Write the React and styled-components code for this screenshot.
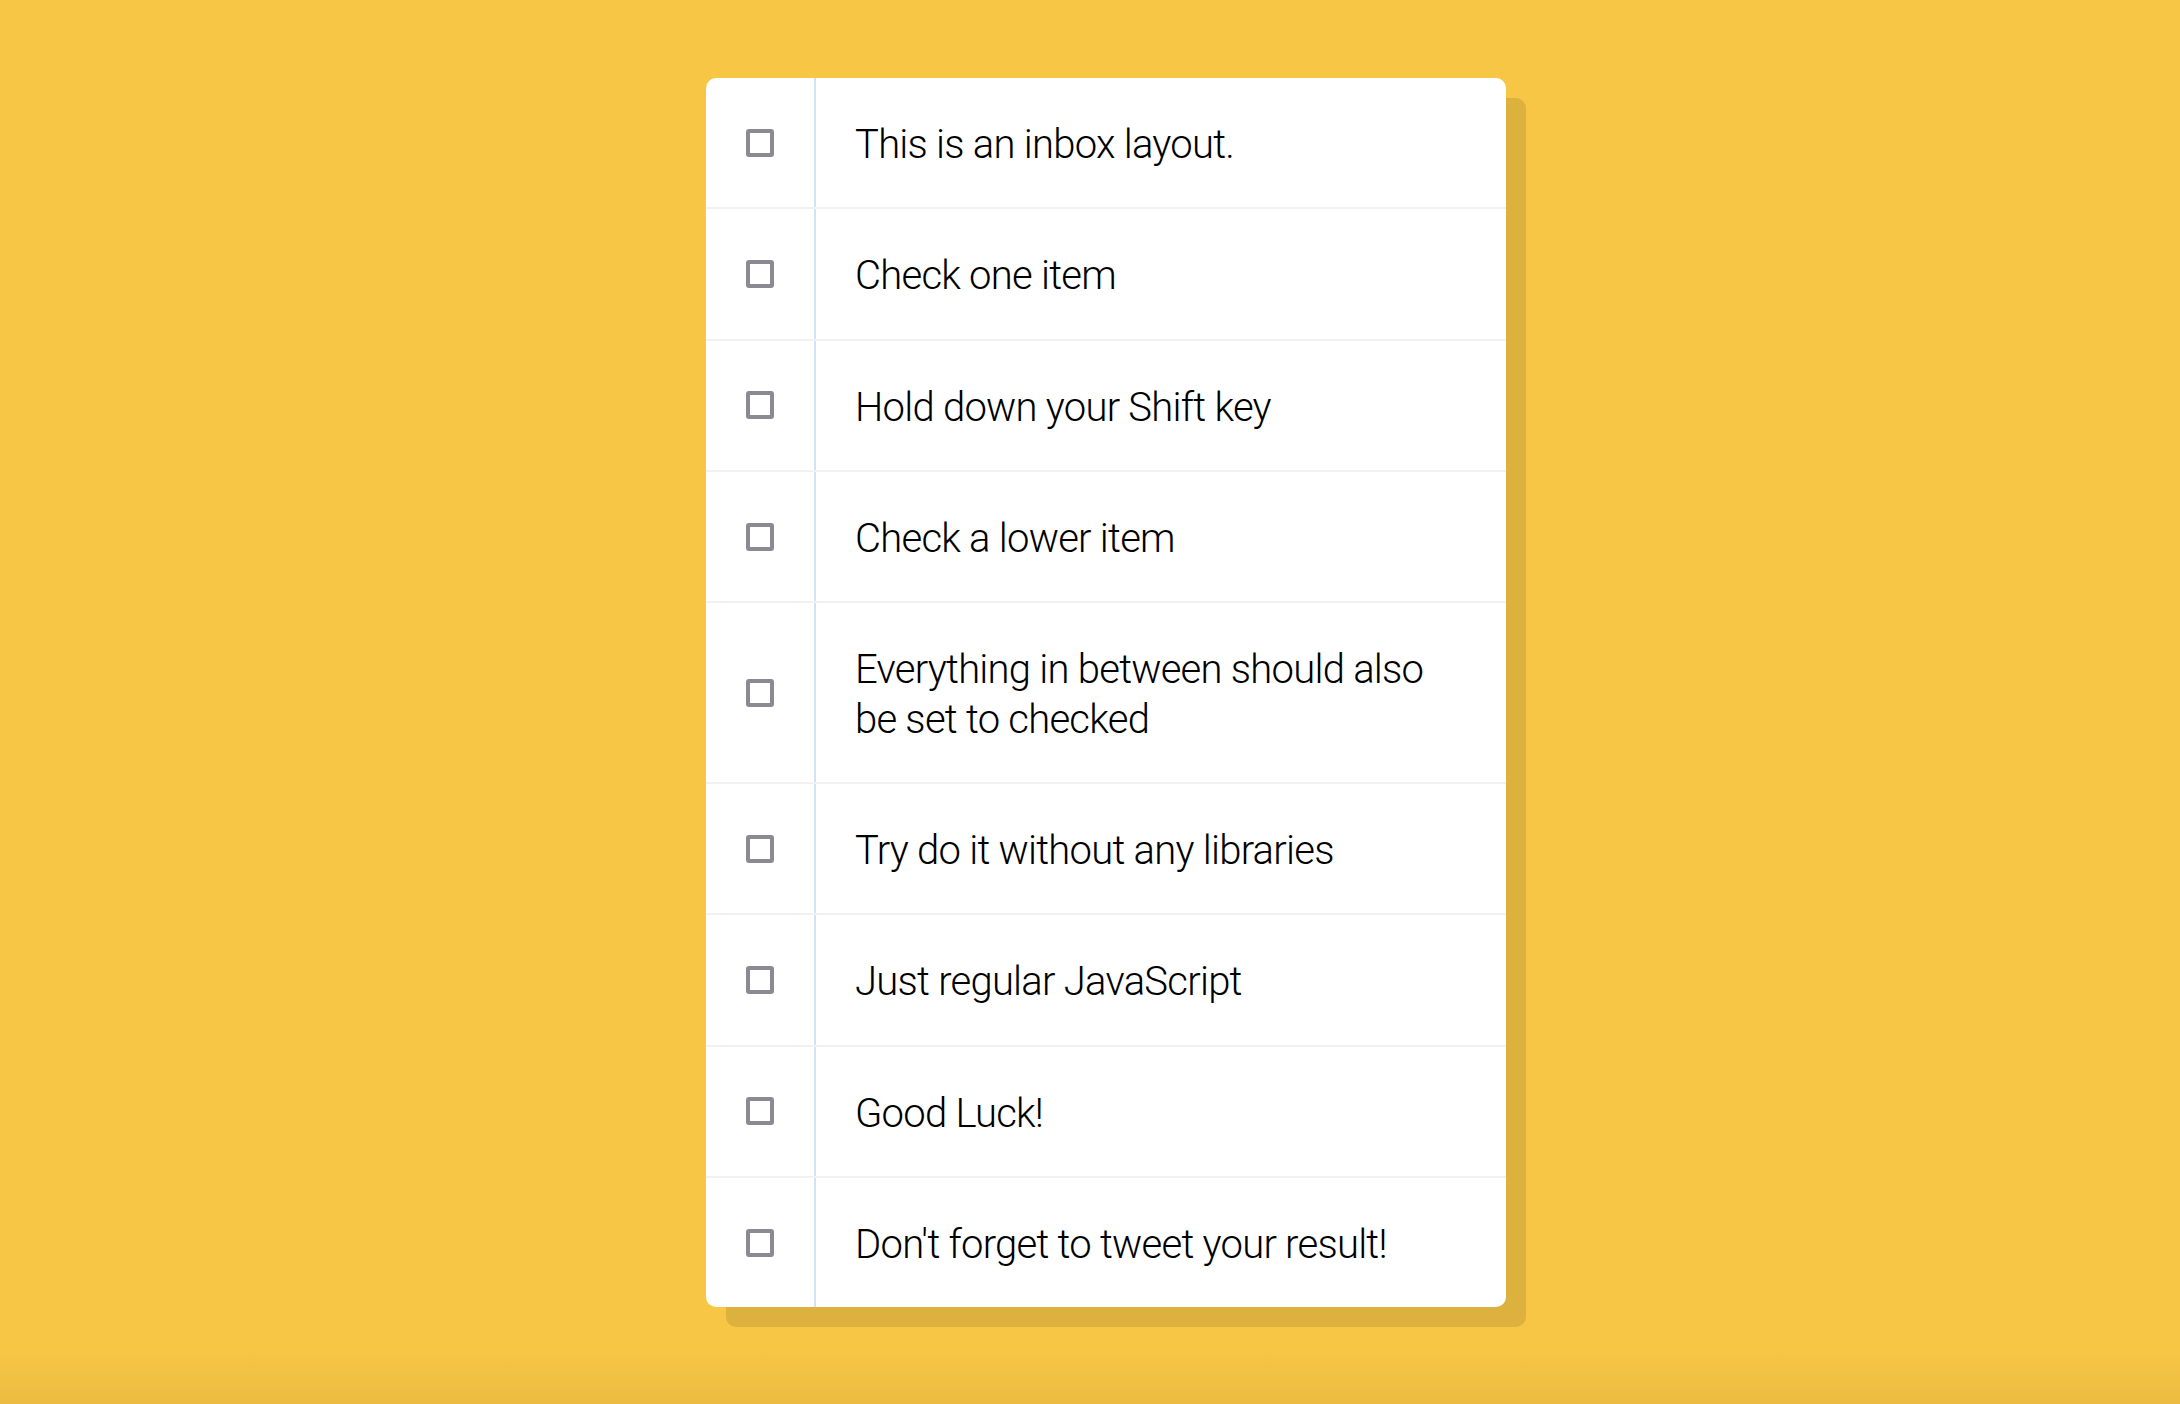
import React from "react";
import styled, { createGlobalStyle } from "styled-components";

const Global = createGlobalStyle`
  html, body {
    margin: 0;
    padding: 0;
    height: 100%;
  }
  body {
    background: linear-gradient(to bottom, #f7c645 0, #f7c645 calc(100% - 56px), #ebbc41 100%);
    font-family: "Roboto", "Liberation Sans", sans-serif;
  }
  #root { min-height: 100%; }
`;

const Page = styled.div`
  padding: 78px 0 0 706px;
  box-sizing: border-box;
`;

const Inbox = styled.div`
  width: 800px;
  background: #ffffff;
  border-radius: 10px;
  box-shadow: 20px 20px 0 rgba(0, 0, 0, 0.1);
`;

const Item = styled.label`
  display: flex;
  align-items: center;
  border-bottom: ${(p) => (p.$last ? "0" : "2px solid #f1f1f1")};
`;

const Check = styled.input.attrs({ type: "checkbox" })`
  appearance: none;
  -webkit-appearance: none;
  flex: none;
  box-sizing: border-box;
  width: 28px;
  height: 28px;
  margin: 40px;
  border: 4px solid #8a8994;
  border-radius: 3px;
  background: #fff;
  cursor: pointer;
  &:checked {
    background: #8a8994;
  }
`;

const Text = styled.p`
  margin: 0;
  padding: 42px 40px 38px 39px;
  flex: 1;
  align-self: stretch;
  display: flex;
  align-items: center;
  font-family: "Roboto", "Liberation Sans", sans-serif;
  font-size: 40px;
  font-weight: 300;
  letter-spacing: -0.75px;
  line-height: 49.35px;
  color: #000;
  border-left: 2px solid #d1e2ff;
  ${Check}:checked + & {
    background: #f9f9f9;
    text-decoration: line-through;
  }
`;

const items = [
  "This is an inbox layout.",
  "Check one item",
  "Hold down your Shift key",
  "Check a lower item",
  "Everything in between should also be set to checked",
  "Try do it without any libraries",
  "Just regular JavaScript",
  "Good Luck!",
  "Don't forget to tweet your result!",
];

export default function App() {
  return (
    <>
      <Global />
      <Page>
        <Inbox>
          {items.map((t, i) => (
            <Item key={i} $last={i === items.length - 1}>
              <Check />
              <Text>{t}</Text>
            </Item>
          ))}
        </Inbox>
      </Page>
    </>
  );
}
